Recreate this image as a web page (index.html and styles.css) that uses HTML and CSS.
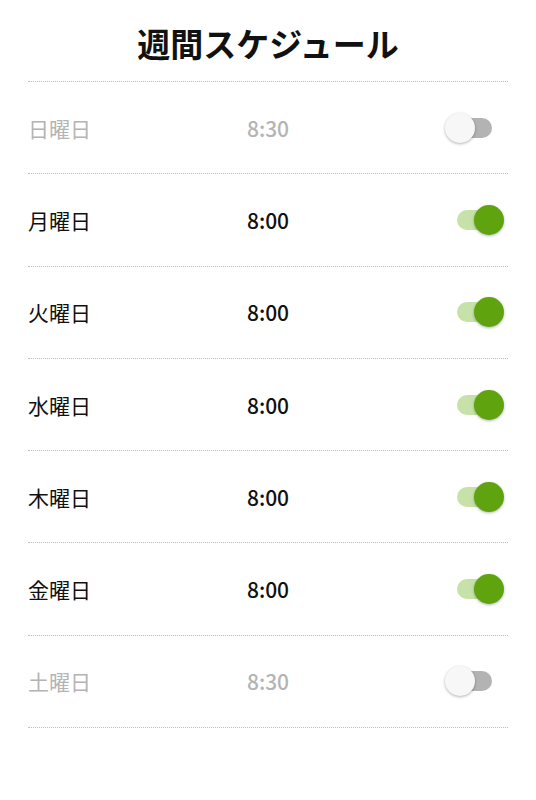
FILE: index.html
```html
<!DOCTYPE html>
<html lang="ja">
<head>
  <meta charset="UTF-8">
  <meta name="viewport" content="width=device-width, initial-scale=1.0">
  <title>週間スケジュール</title>
  <link rel="stylesheet" href="styles.css">
</head>
<body>
  <div class="schedule">
    <h1>週間スケジュール</h1>

    <label class="row">
      <span class="day">日曜日</span>
      <span class="time">8:30</span>
      <input type="checkbox" class="toggle">
    </label>
    <label class="row">
      <span class="day">月曜日</span>
      <span class="time">8:00</span>
      <input type="checkbox" class="toggle" checked>
    </label>
    <label class="row">
      <span class="day">火曜日</span>
      <span class="time">8:00</span>
      <input type="checkbox" class="toggle" checked>
    </label>
    <label class="row">
      <span class="day">水曜日</span>
      <span class="time">8:00</span>
      <input type="checkbox" class="toggle" checked>
    </label>
    <label class="row">
      <span class="day">木曜日</span>
      <span class="time">8:00</span>
      <input type="checkbox" class="toggle" checked>
    </label>
    <label class="row">
      <span class="day">金曜日</span>
      <span class="time">8:00</span>
      <input type="checkbox" class="toggle" checked>
    </label>
    <label class="row">
      <span class="day">土曜日</span>
      <span class="time">8:30</span>
      <input type="checkbox" class="toggle">
    </label>
  </div>
</body>
</html>
```

FILE: styles.css
```css
body {
  font-family: "Noto Sans CJK JP", "Noto Sans", sans-serif;
  margin: 0;
  background-color: #ffffff;
  color: #111111;
}

.schedule {
  padding: 0 28px;
}

.schedule h1 {
  margin: 0;
  height: 82px;
  padding-top: 4px;
  box-sizing: border-box;
  display: flex;
  align-items: center;
  justify-content: center;
  font-size: 33px;
  font-weight: bold;
  border-bottom: 1px dotted #bdbdbd;
}

.row {
  display: grid;
  grid-template-columns: 1fr auto 1fr;
  align-items: center;
  height: 91.3px;
  border-bottom: 1px dotted #bdbdbd;
  cursor: pointer;
}

.row .day {
  font-size: 21px;
}

.row .time {
  font-size: 21px;
  font-weight: 500;
}

.row:has(.toggle:not(:checked)) .day,
.row:has(.toggle:not(:checked)) .time {
  color: #b4b4b4;
}

.toggle {
  appearance: none;
  justify-self: end;
  position: relative;
  width: 59px;
  height: 30px;
  margin: 0 4px 0 0;
  cursor: pointer;
}

.toggle::before {
  content: "";
  position: absolute;
  left: 12px;
  top: 5px;
  width: 35px;
  height: 20px;
  border-radius: 10px;
  background-color: #b3b3b3;
  transition: background-color 0.2s;
}

.toggle::after {
  content: "";
  position: absolute;
  left: 0;
  top: 0;
  width: 30px;
  height: 30px;
  border-radius: 50%;
  background-color: #f7f7f7;
  box-shadow: 0 1px 3px rgba(0, 0, 0, 0.3);
  transition: left 0.2s, background-color 0.2s;
}

.toggle:checked::before {
  background-color: #c6e2a9;
}

.toggle:checked::after {
  left: 29px;
  background-color: #5fa40f;
}
```
